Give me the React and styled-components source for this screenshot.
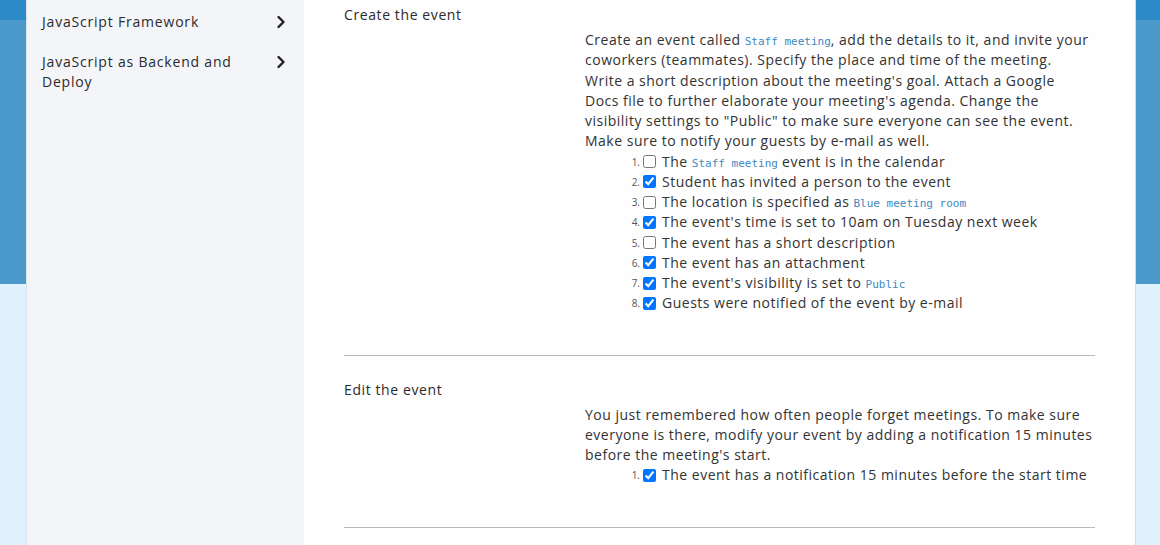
import React from "react";
import styled, { createGlobalStyle } from "styled-components";

const GlobalStyle = createGlobalStyle`
  html, body {
    margin: 0;
    padding: 0;
  }
  body {
    font-family: "Open Sans", "Liberation Sans", sans-serif;
    background: linear-gradient(
      to bottom,
      #2a8bc8 0,
      #2a8bc8 20px,
      #4b98cb 20px,
      #4b98cb 284px,
      #e1f0fd 284px
    );
    background-repeat: no-repeat;
    background-color: #e1f0fd;
    min-height: 100vh;
  }
`;

const Shell = styled.div`
  display: flex;
  margin: 0 24px 0 26px;
  min-height: 100vh;
`;

const Sidebar = styled.nav`
  width: 277px;
  flex-shrink: 0;
  background: #f4f5f9;
  border-left: 1px solid #dce3ea;
  padding-top: 2px;
`;

const NavItem = styled.div`
  display: flex;
  align-items: flex-start;
  justify-content: space-between;
  padding: 10px 18px 10px 15px;
  color: #2b2b2b;
  font-size: 14px;
  line-height: 20px;
  letter-spacing: 0.8px;
  cursor: pointer;
`;

const NavLabel = styled.span`
  max-width: 210px;
`;

const Chevron = styled.svg`
  width: 10px;
  height: 14px;
  margin-top: 3px;
  flex-shrink: 0;
`;

const Main = styled.main`
  width: 751px;
  flex-shrink: 0;
  background: #fefefe;
  border-right: 1px solid #d9d9d9;
  padding: 0 40px;
  color: #333;
`;

const Section = styled.section`
  padding: ${({ $top }) => $top}px 0 41px;
  border-bottom: 1px solid #b9b9b9;
`;

const Title = styled.h3`
  margin: 0 0 5px;
  font-size: 14px;
  font-weight: 400;
  line-height: 20px;
  letter-spacing: 0.6px;
  color: #2b2b2b;
`;

const Body = styled.div`
  margin-left: 241px;
  width: ${({ $width }) => $width}px;
  font-size: 14px;
  line-height: 20.25px;
  letter-spacing: 0.5px;
`;

const Text = styled.p`
  margin: 0;
`;

const Code = styled.code`
  font-family: "DejaVu Sans Mono", "Liberation Mono", monospace;
  font-size: 11px;
  line-height: 1;
  letter-spacing: 0;
  color: #4189c2;
`;

const Checklist = styled.ol`
  list-style: none;
  margin: 0;
  padding: 0;
`;

const Item = styled.li`
  display: flex;
  align-items: center;
  height: 20.25px;
`;

const Num = styled.span`
  width: 55px;
  text-align: right;
  font-size: 10px;
  letter-spacing: 0;
  color: #555;
`;

const Box = styled.input`
  width: 13px;
  height: 13px;
  margin: 0 6px 0 3px;
  flex-shrink: 0;
  accent-color: #0075ff;
`;

const ChevronIcon = () => (
  <Chevron viewBox="0 0 10 14">
    <polyline
      points="2.5,2 7.5,7 2.5,12"
      fill="none"
      stroke="#222"
      strokeWidth="2.4"
      strokeLinecap="round"
      strokeLinejoin="round"
    />
  </Chevron>
);

const createChecks = [
  [false, <>The <Code>Staff meeting</Code> event is in the calendar</>],
  [true, "Student has invited a person to the event"],
  [false, <>The location is specified as <Code>Blue meeting room</Code></>],
  [true, "The event's time is set to 10am on Tuesday next week"],
  [false, "The event has a short description"],
  [true, "The event has an attachment"],
  [true, <>The event's visibility is set to <Code>Public</Code></>],
  [true, "Guests were notified of the event by e-mail"],
];

const editChecks = [
  [true, "The event has a notification 15 minutes before the start time"],
];

const Checks = ({ items }) => (
  <Checklist>
    {items.map(([done, label], i) => (
      <Item key={i}>
        <Num>{i + 1}.</Num>
        <Box type="checkbox" defaultChecked={done} readOnly />
        <span>{label}</span>
      </Item>
    ))}
  </Checklist>
);

export default function App() {
  return (
    <>
      <GlobalStyle />
      <Shell>
        <Sidebar>
          <NavItem>
            <NavLabel>JavaScript Framework</NavLabel>
            <ChevronIcon />
          </NavItem>
          <NavItem>
            <NavLabel>JavaScript as Backend and Deploy</NavLabel>
            <ChevronIcon />
          </NavItem>
        </Sidebar>
        <Main>
          <Section $top={5}>
            <Title>Create the event</Title>
            <Body $width={506}>
              <Text>
                Create an event called <Code>Staff meeting</Code>, add the
                details to it, and invite your coworkers (teammates). Specify
                the place and time of the meeting. Write a short description
                about the meeting's goal. Attach a Google Docs file to further
                elaborate your meeting's agenda. Change the visibility settings
                to "Public" to make sure everyone can see the event. Make sure
                to notify your guests by e-mail as well.
              </Text>
              <Checks items={createChecks} />
            </Body>
          </Section>
          <Section $top={24}>
            <Title>Edit the event</Title>
            <Body $width={514}>
              <Text>
                You just remembered how often people forget meetings. To make
                sure everyone is there, modify your event by adding a
                notification 15 minutes before the meeting's start.
              </Text>
              <Checks items={editChecks} />
            </Body>
          </Section>
        </Main>
      </Shell>
    </>
  );
}
